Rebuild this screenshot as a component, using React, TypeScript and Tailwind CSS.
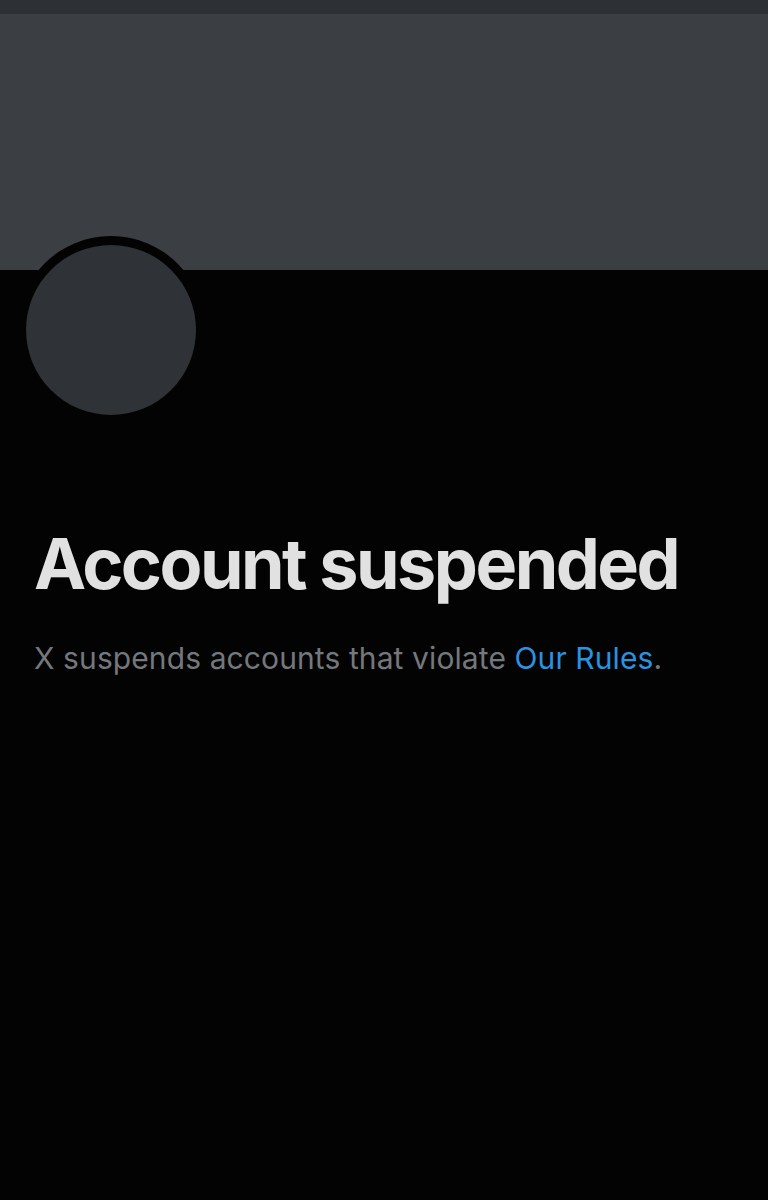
export default function App() {
  return (
    <div className="min-h-[1200px] w-[768px] bg-[#030303]" style={{ fontFamily: "Inter, 'Liberation Sans', sans-serif" }}>
      <div className="h-[14px] bg-[#2d3135]" />
      <div className="h-[256px] bg-[#3b3e42]" />
      <div className="relative h-[150px]">
        <div className="absolute left-[17px] top-[-34px] h-[188px] w-[188px] rounded-full bg-[#030303] p-[9px]">
          <div className="h-full w-full rounded-full bg-[#2f3236]" />
        </div>
      </div>
      <div className="px-[34px] pt-[109px]">
        <h1 className="text-[70px] font-bold leading-none tracking-[-2.5px] text-[#e1e1e1]">Account suspended</h1>
        <p className="mt-[44px] text-[30px] leading-none tracking-[0.1px] text-[#74787c]">
          X suspends accounts that violate <span className="text-[#2a92e0]">Our Rules</span>.
        </p>
      </div>
    </div>
  );
}
